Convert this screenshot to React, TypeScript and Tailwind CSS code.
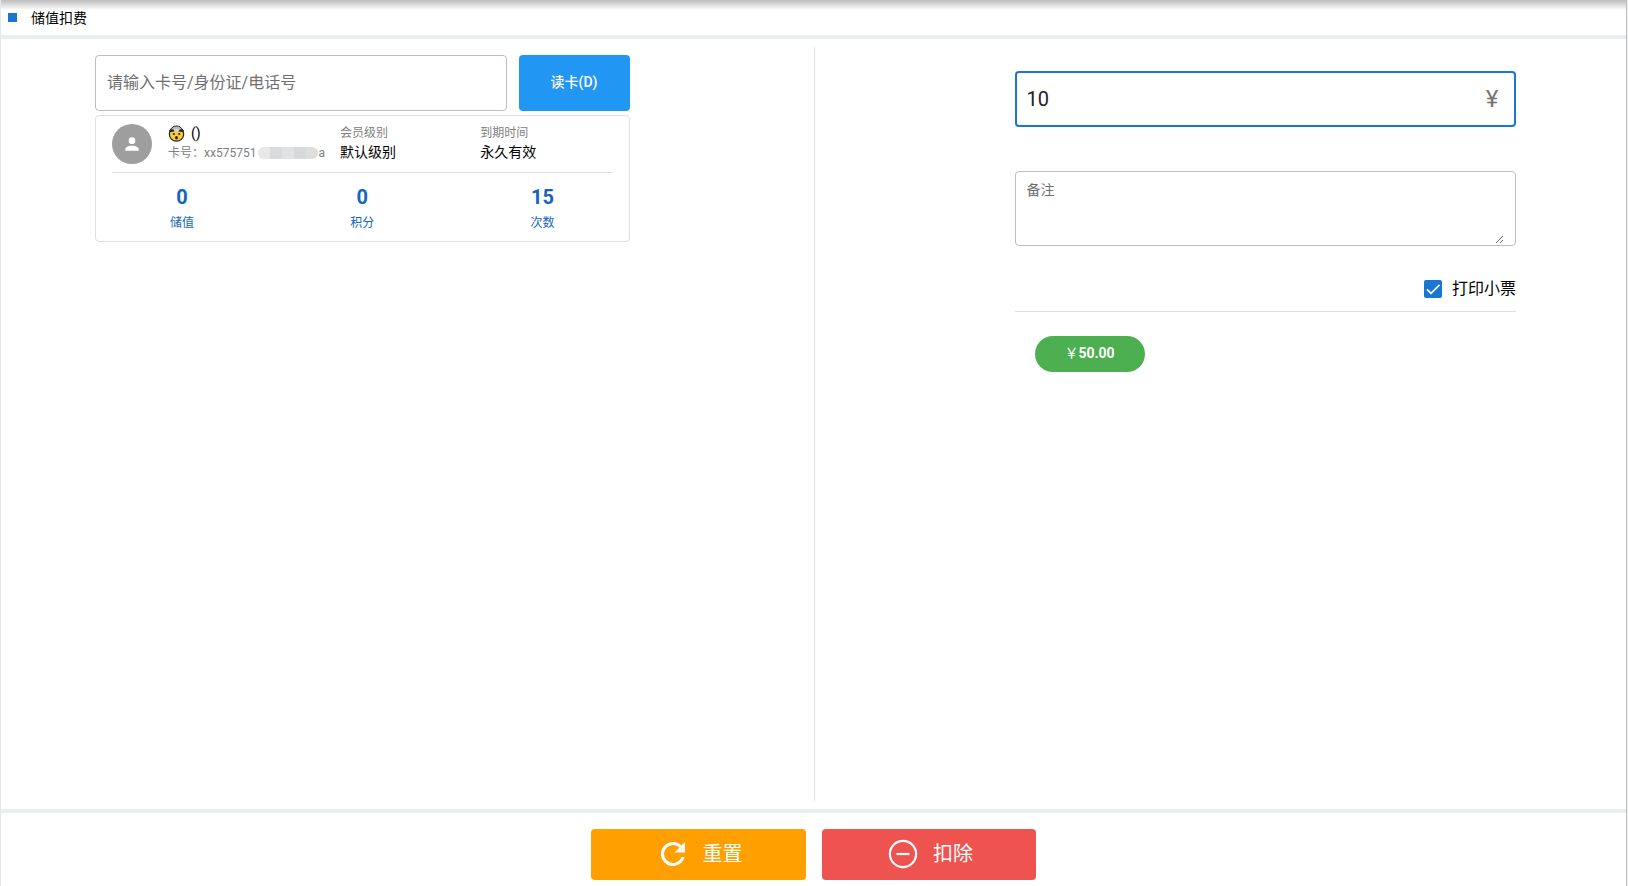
import React, { useState } from 'react'

interface Stat {
  label: string
  value: number
}

const stats: Stat[] = [
  { label: '储值', value: 0 },
  { label: '积分', value: 0 },
  { label: '次数', value: 15 }
]

function AccountIcon() {
  return (
    <svg viewBox="0 0 24 24" className="w-5 h-5" fill="currentColor" aria-hidden="true">
      <path d="M12 4a4 4 0 0 1 4 4 4 4 0 0 1-4 4 4 4 0 0 1-4-4 4 4 0 0 1 4-4m0 10c4.42 0 8 1.79 8 4v2H4v-2c0-2.21 3.58-4 8-4z" />
    </svg>
  )
}

function RefreshIcon() {
  return (
    <svg viewBox="0 0 24 24" className="w-9 h-9" fill="currentColor" aria-hidden="true">
      <path d="M17.65 6.35C16.2 4.9 14.21 4 12 4a8 8 0 0 0 0 16c3.73 0 6.84-2.55 7.73-6h-2.08c-.82 2.33-3.04 4-5.65 4a6 6 0 1 1 0-12c1.66 0 3.14.69 4.22 1.78L13 11h7V4l-2.35 2.35z" />
    </svg>
  )
}

function MinusCircleIcon() {
  return (
    <svg viewBox="0 0 36 36" className="w-9 h-9" fill="none" stroke="currentColor" strokeWidth="2.2" aria-hidden="true">
      <circle cx="18" cy="18" r="13.1" />
      <path d="M11.5 18h13" />
    </svg>
  )
}

// Shocked face with the top of the head blown off
function FaceIcon() {
  return (
    <svg viewBox="0 0 17 17" className="w-[17px] h-[17px]" aria-hidden="true">
      <circle cx="8.5" cy="9" r="7.2" fill="#fcc93a" stroke="#222" strokeWidth="1.2" />
      <path d="M2.6 5.2C3.4 2.4 5.6 1 8.5 1s5.1 1.4 5.9 4.2Z" fill="#b9bcbe" stroke="#222" strokeWidth="1" />
      <path d="M1 5 5.5 4.5 6.5 6.5 2 7ZM16 5l-4.5-.5-1 2L15 7Z" fill="#222" />
      <path d="M5.5 4h6l-1 2.5h-4Z" fill="#d5d7d8" />
      <circle cx="5.8" cy="9" r="1.1" fill="#222" />
      <circle cx="11.2" cy="9" r="1.1" fill="#222" />
      <ellipse cx="8.5" cy="12.7" rx="1.5" ry="1.8" fill="#222" />
    </svg>
  )
}

function MemberCard() {
  return (
    <section className="mt-1 px-4 py-2 border border-[#e0e0e0] rounded">
      <div className="flex pb-2 border-b border-[#e0e0e0]">
        <div className="w-10 h-10 shrink-0 rounded-full bg-[#9e9e9e] text-white flex items-center justify-center">
          <AccountIcon />
        </div>
        <div className="w-[172px] ml-4 shrink-0">
          <div className="flex items-center gap-[6px] h-[18px] text-sm">
            <FaceIcon />
            <span>()</span>
          </div>
          <div className="flex items-center h-[22px] text-xs text-[#808080] whitespace-nowrap">
            <span>卡号：xx575751</span>
            <span className="w-[60px] h-3 ml-[2px] flex rounded-md overflow-hidden">
              <span className="flex-1 bg-[#e8e8e8]" />
              <span className="flex-1 bg-[#d9dadc]" />
              <span className="flex-1 bg-[#e2e2e2]" />
              <span className="flex-1 bg-[#d8d9db]" />
              <span className="flex-1 bg-[#dedede]" />
            </span>
            <span>a</span>
          </div>
        </div>
        <div className="flex-1 flex gap-2">
          <div className="flex-1">
            <div className="text-xs leading-[18px] text-[#808080]">会员级别</div>
            <div className="text-sm leading-5">默认级别</div>
          </div>
          <div className="flex-1">
            <div className="text-xs leading-[18px] text-[#808080]">到期时间</div>
            <div className="text-sm leading-5">永久有效</div>
          </div>
        </div>
      </div>
      <div className="grid grid-cols-3 -mx-5 pt-2 text-center text-[#1565c0]">
        {stats.map((stat) => (
          <div key={stat.label}>
            <div className="text-xl leading-8 font-bold">{stat.value}</div>
            <div className="text-xs leading-5">{stat.label}</div>
          </div>
        ))}
      </div>
    </section>
  )
}

export default function App() {
  const [amount, setAmount] = useState('10')
  const [printTicket, setPrintTicket] = useState(true)

  return (
    <div className="pr-px bg-[#f0f0f0]">
      <div className="min-h-screen flex flex-col bg-white text-black border-l border-l-[#e8e8e8] border-r border-r-[#bdbdbd] font-['Roboto','Noto_Sans_CJK_SC',sans-serif]">
        {/* Title bar */}
        <header className="h-[39px] border-b-4 border-[#e9eef2] bg-linear-to-b from-[#bdbdbd] to-white to-[10px] flex items-center gap-[14px] pl-[7px]">
          <span className="w-[9px] h-[9px] bg-[#1976d2]" />
          <h1 className="text-sm leading-5">储值扣费</h1>
        </header>

        <main className="flex-1 grid grid-cols-2 py-2">
          {/* Member lookup */}
          <div className="pl-[94px] pr-[184px] pt-2">
            <div className="flex gap-3">
              <input
                type="text"
                aria-label="卡号/身份证/电话号"
                placeholder="请输入卡号/身份证/电话号"
                className="flex-1 min-w-0 h-14 px-[11px] pb-[2px] border border-[#bdbdbd] rounded text-base placeholder:text-[#707070] focus:outline-none"
              />
              <button type="button" className="w-[111px] h-14 pb-[2px] rounded-sm bg-[#2196f3] text-white text-sm font-medium">
                读卡(D)
              </button>
            </div>
            <MemberCard />
          </div>

          {/* Deduction form */}
          <div className="border-l border-[#e0e0e0] pl-[200px] pr-[110px] pt-6">
            <div className="flex items-center h-14 px-[10px] border-2 border-[#1976d2] rounded">
              <input
                type="text"
                aria-label="金额"
                value={amount}
                onChange={(e) => setAmount(e.target.value)}
                className="flex-1 min-w-0 text-xl text-[#212121] focus:outline-none"
              />
              <span className="w-6 text-2xl text-center text-[#757575]">¥</span>
            </div>

            <div className="mt-11 h-[75px] pl-[11px] pr-[11px] pb-px border border-[#bdbdbd] rounded">
              <textarea
                aria-label="备注"
                placeholder="备注"
                className="block w-full h-full pt-2 text-sm placeholder:text-[#707070] resize focus:outline-none"
              />
            </div>

            <div className="mt-[31px] pb-[10px] flex justify-end border-b border-[#e0e0e0]">
              <label className="flex items-center gap-[10px] text-base leading-6">
                <span className="relative w-[18px] h-[18px]">
                  <input
                    type="checkbox"
                    checked={printTicket}
                    onChange={(e) => setPrintTicket(e.target.checked)}
                    className="block w-[18px] h-[18px] appearance-none rounded-xs border-2 border-[#757575] checked:border-[#1976d2] checked:bg-[#1976d2]"
                  />
                  {printTicket && (
                    <svg viewBox="0 0 18 18" className="absolute inset-0 pointer-events-none" fill="none" stroke="#fff" strokeWidth="1.8" aria-hidden="true">
                      <path d="M3 9.3 7 13.3 15.5 4.8" />
                    </svg>
                  )}
                </span>
                打印小票
              </label>
            </div>

            <button type="button" className="mt-6 ml-5 w-[110px] h-9 pb-[2px] rounded-full bg-[#4caf50] text-white text-sm font-bold">
              <span className="font-normal">￥</span>50.00
            </button>
          </div>
        </main>

        {/* Actions */}
        <footer className="flex justify-center gap-4 pt-4 pb-[6px] border-t-4 border-[#e9eef2] text-white text-xl">
          <button type="button" className="w-[215px] h-[51px] pb-[2px] rounded-sm bg-[#ffa000] flex items-center justify-center gap-3">
            <RefreshIcon />
            重置
          </button>
          <button type="button" className="w-[214px] h-[51px] pb-[2px] rounded-sm bg-[#ef5350] flex items-center justify-center gap-3">
            <MinusCircleIcon />
            扣除
          </button>
        </footer>
      </div>
    </div>
  )
}
